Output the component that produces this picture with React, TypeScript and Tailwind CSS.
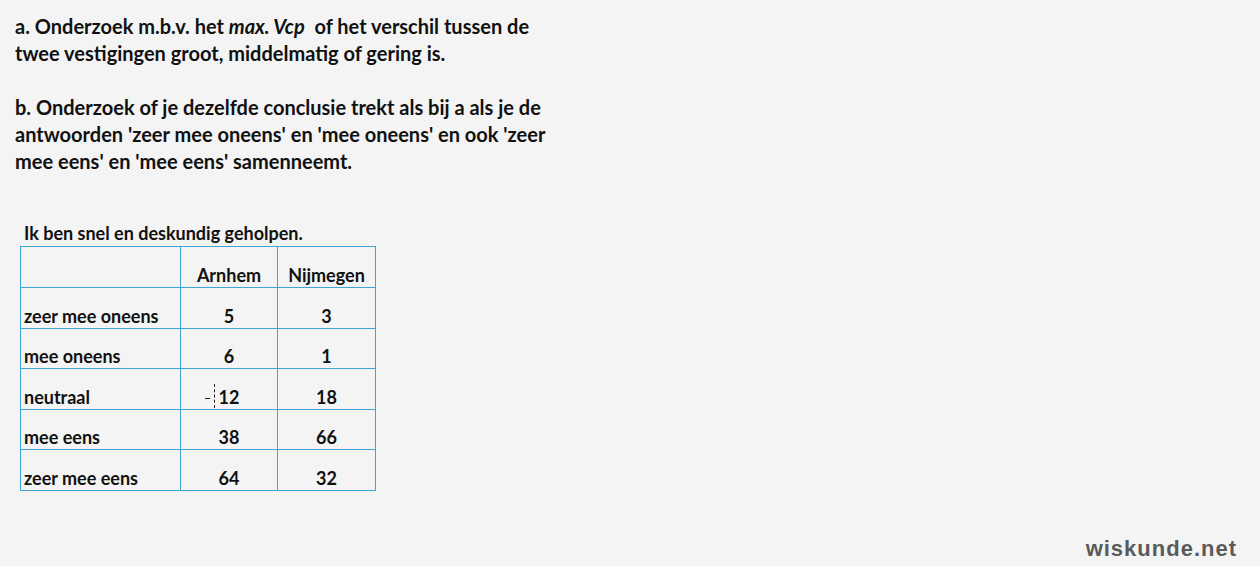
import React from "react";

const ROWS: [string, string, string][] = [
  ["zeer mee oneens", "5", "3"],
  ["mee oneens", "6", "1"],
  ["neutraal", "12", "18"],
  ["mee eens", "38", "66"],
  ["zeer mee eens", "64", "32"],
];

const cell = "border border-[#3ea6d6] px-[3px] pb-[1px] align-bottom";

export default function App() {
  return (
    <div
      className="relative h-[566px] w-[1260px] overflow-hidden bg-[#f4f4f4] text-[#111]"
      style={{ fontFamily: "Lato, 'Open Sans', sans-serif" }}
    >
      <div className="pl-[15px] pt-[13px] text-[20px] font-bold leading-[27px]">
        <p>
          a. Onderzoek m.b.v. het <i>max. Vcp</i>&nbsp; of het verschil tussen de
          <br />
          twee vestigingen groot, middelmatig of gering is.
        </p>
        <p className="mt-[27px]">
          b. Onderzoek of je dezelfde conclusie trekt als bij a als je de
          <br />
          antwoorden 'zeer mee oneens' en 'mee oneens' en ook 'zeer
          <br />
          mee eens' en 'mee eens' samenneemt.
        </p>
      </div>

      <div className="ml-[20px] mt-[45px]">
        <div className="pl-[4px] text-[18px] font-bold leading-[26px]">
          Ik ben snel en deskundig geholpen.
        </div>
        <table className="border-collapse text-[18px] font-bold leading-[22px]">
          <tbody>
            <tr className="h-[41px]">
              <td className={`${cell} w-[160px]`}></td>
              <td className={`${cell} w-[97px] text-center`}>Arnhem</td>
              <td className={`${cell} w-[98px] text-center`}>Nijmegen</td>
            </tr>
            {ROWS.map(([label, a, n]) => (
              <tr key={label} className="h-[40.6px]">
                <td className={cell}>{label}</td>
                <td className={`${cell} text-center`}>
                  <span className="relative">
                    {label === "neutraal" && (
                      <span className="absolute -left-[14px] top-0 h-full w-[10px]">
                        <span className="absolute left-0 top-[12px] h-[1px] w-[5px] bg-[#222]" />
                        <span className="absolute left-[9px] -top-[2px] h-[24px] border-l border-dashed border-[#222]" />
                      </span>
                    )}
                    {a}
                  </span>
                </td>
                <td className={`${cell} text-center`}>{n}</td>
              </tr>
            ))}
          </tbody>
        </table>
      </div>

      <div
        className="absolute bottom-[1px] right-[23px] text-[22px] font-bold tracking-[1px] text-[#5a5a5a]"
        style={{ fontFamily: "'Liberation Sans', Arial, sans-serif" }}
      >
        wiskunde.net
      </div>
    </div>
  );
}
